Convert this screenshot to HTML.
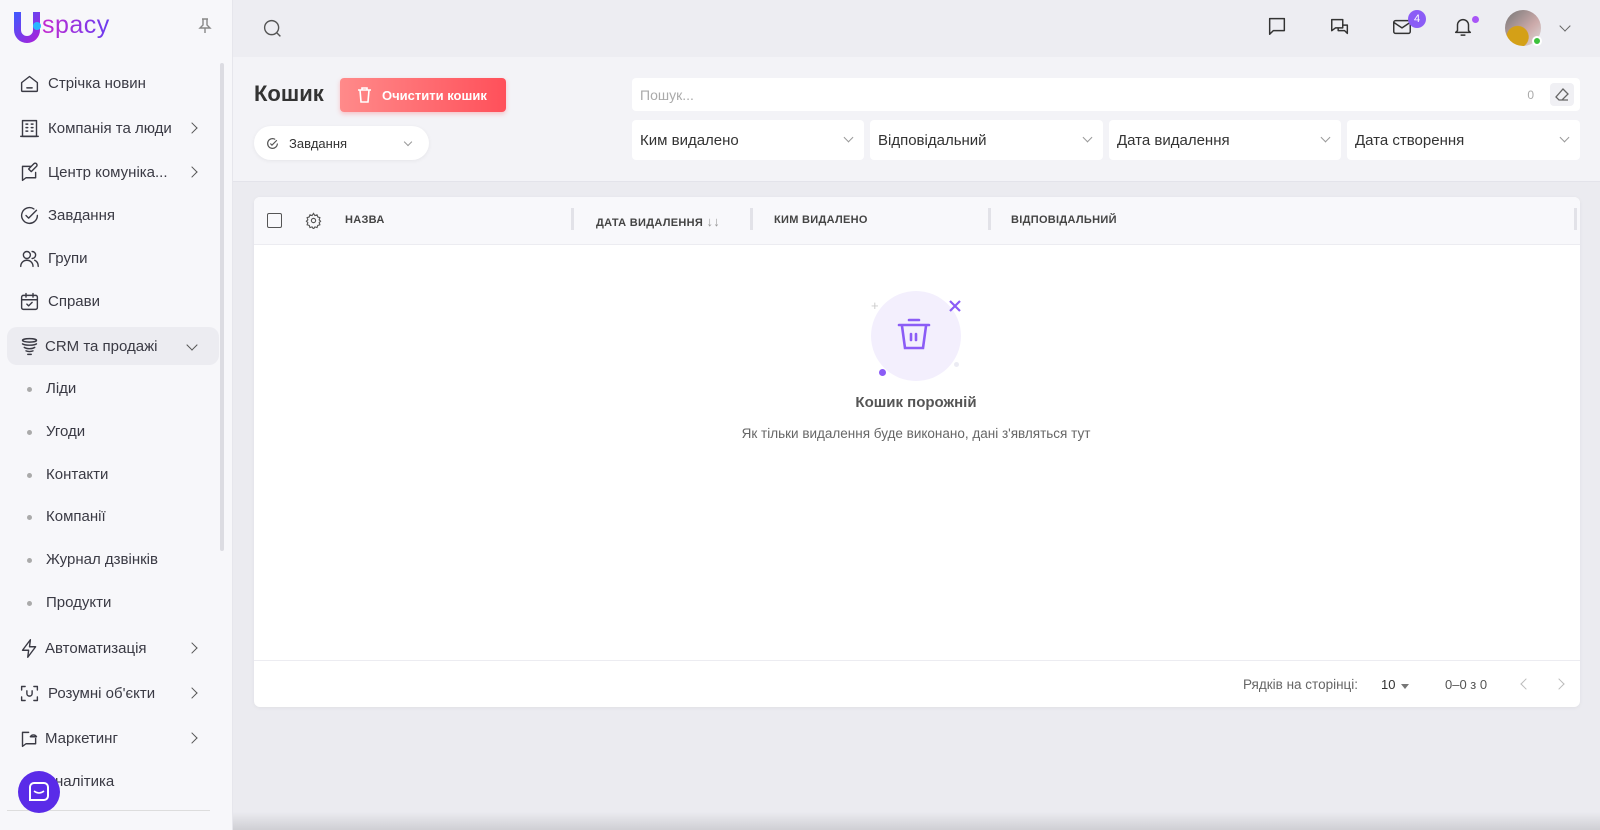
<!DOCTYPE html>
<html><head><meta charset="utf-8"><style>
*{box-sizing:border-box;margin:0;padding:0}
body{width:1600px;height:830px;overflow:hidden;font-family:"Liberation Sans","Noto Sans CJK SC",sans-serif;background:#ebebf0;position:relative;color:#333}
.abs{position:absolute}
.sb{position:absolute;left:0;top:0;width:233px;height:830px;background:#f7f7fa;border-right:1px solid #e6e6ec}
.mi{position:absolute;left:0;width:220px;height:38px;display:flex;align-items:center;font-size:15px;color:#3a3a44}
.mi svg{position:absolute;left:19px;width:21px;height:21px;fill:none;stroke:#3a3a44;stroke-width:1.6;stroke-linecap:round;stroke-linejoin:round}
.mi .t{position:absolute;left:48px}
.mi .ch{position:absolute;left:188px;width:8px;height:8px;border-right:1.6px solid #555;border-top:1.6px solid #555;transform:rotate(45deg)}
.sub{position:absolute;left:0;font-size:15px;color:#3a3a44}
.sub:before{content:"";position:absolute;left:27px;top:7px;width:5px;height:5px;border-radius:50%;background:#aaa}
.sub span{position:absolute;left:46px;white-space:nowrap}
.hi svg{fill:none;stroke:#333;stroke-width:1.6;stroke-linecap:round;stroke-linejoin:round}
.inp{position:absolute;background:#fff;border-radius:4px;font-size:15px;color:#333;display:flex;align-items:center;padding-left:8px}
.inp .dd{position:absolute;right:12px;top:14px;width:7px;height:7px;border-right:1.3px solid #999;border-bottom:1.3px solid #999;transform:rotate(45deg)}
.th{position:absolute;top:214px;font-size:11px;font-weight:bold;color:#444;letter-spacing:.3px}
.dv{position:absolute;top:208px;width:3px;height:22px;background:#e2e2e8}
</style></head><body>
<div class="sb">
  <svg class="abs" style="left:13px;top:12px" width="28" height="32" viewBox="0 0 28 32"><defs><linearGradient id="g" x1="0" y1="0" x2="1" y2="1"><stop offset="0" stop-color="#3b5bff"/><stop offset="1" stop-color="#b51bd6"/></linearGradient></defs><path d="M1 0h7v18a6 6 0 0 0 12 0V0h7v18a13 13 0 0 1-26 0z" fill="url(#g)"/></svg>
  <div class="abs" style="left:33px;top:22px;width:8px;height:8px;border-radius:50%;background:#2bb6ff"></div>
  <div class="abs" style="left:42px;top:11px;font-size:25px;color:#a32fd8;letter-spacing:.5px;background:linear-gradient(90deg,#c42ad0,#6a3cf0);-webkit-background-clip:text;color:transparent">spacy</div>
  <svg class="abs" style="left:198px;top:18px" width="14" height="16" viewBox="0 0 14 16" fill="none" stroke="#888" stroke-width="1.4"><path d="M4 1h6M5 1v6L2 10h10L9 7V1M7 10v5"/></svg>
  <div class="abs" style="left:220px;top:63px;width:4px;height:488px;border-radius:2px;background:#dcdce2"></div>

  <div class="mi" style="top:64px"><svg viewBox="0 0 24 24"><path d="M3 11l9-7 9 7v9a1 1 0 0 1-1 1H4a1 1 0 0 1-1-1z"/><path d="M9 17h6"/></svg><span class="t">Стрічка новин</span></div>
  <div class="mi" style="top:109px"><svg viewBox="0 0 24 24"><rect x="4" y="3" width="16" height="18"/><path d="M8 7h2M14 7h2M8 11h2M14 11h2M8 15h2M14 15h2M2 21h20"/></svg><span class="t">Компанія та люди</span><i class="ch"></i></div>
  <div class="mi" style="top:153px"><svg viewBox="0 0 24 24"><path d="M4 5h9M4 5v16l4-3h11v-6"/><path d="M14 11l6-6a2 2 0 0 0-3-3l-6 6z"/></svg><span class="t">Центр комуніка...</span><i class="ch"></i></div>
  <div class="mi" style="top:196px"><svg viewBox="0 0 24 24"><path d="M21 12a9 9 0 1 1-4-7.5"/><path d="M8 12l3 3 9-9"/></svg><span class="t">Завдання</span></div>
  <div class="mi" style="top:239px"><svg viewBox="0 0 24 24"><circle cx="9" cy="8" r="4"/><path d="M2 21c0-4 3-7 7-7s7 3 7 7M15 4a4 4 0 0 1 0 8M18 14c2 1 4 3 4 7"/></svg><span class="t">Групи</span></div>
  <div class="mi" style="top:282px"><svg viewBox="0 0 24 24"><rect x="3" y="5" width="18" height="16" rx="2"/><path d="M8 3v4M16 3v4M3 10h18M9 15l2 2 4-4"/></svg><span class="t">Справи</span></div>
  <div class="abs" style="left:7px;top:327px;width:212px;height:38px;border-radius:10px;background:#ececf1"></div>
  <div class="mi" style="top:327px"><svg viewBox="0 0 24 24"><ellipse cx="12" cy="5" rx="8" ry="2"/><path d="M4 9c3 2 13 2 16 0M6 13c3 2 9 2 12 0M8 17c2 1 6 1 8 0M10 21h4"/></svg><span class="t" style="left:45px">CRM та продажі</span><i class="ch" style="transform:rotate(135deg);top:14px"></i></div>
  <div class="sub" style="top:380px"><span>Ліди</span></div>
  <div class="sub" style="top:423px"><span>Угоди</span></div>
  <div class="sub" style="top:466px"><span>Контакти</span></div>
  <div class="sub" style="top:508px"><span>Компанії</span></div>
  <div class="sub" style="top:551px"><span>Журнал дзвінків</span></div>
  <div class="sub" style="top:594px"><span>Продукти</span></div>
  <div class="mi" style="top:629px"><svg viewBox="0 0 24 24"><path d="M13 2L4 14h7l-1 8 9-12h-7z"/></svg><span class="t" style="left:45px">Автоматизація</span><i class="ch"></i></div>
  <div class="mi" style="top:674px"><svg viewBox="0 0 24 24"><path d="M3 8V4h4M17 4h4v4M21 16v4h-4M7 20H3v-4M9 9v3a3 3 0 0 0 6 0V9"/></svg><span class="t">Розумні об'єкти</span><i class="ch"></i></div>
  <div class="mi" style="top:719px"><svg viewBox="0 0 24 24"><path d="M4 5h7M4 5v16l4-3h11v-6M13 10a4 4 0 0 1 7 0z"/></svg><span class="t" style="left:45px">Маркетинг</span><i class="ch"></i></div>
  <div class="mi" style="top:762px"><span class="t" style="left:45px">Аналітика</span></div>
  <div class="abs" style="left:7px;top:810px;width:203px;height:1px;background:#ddd"></div>
  <div class="abs" style="left:18px;top:771px;width:42px;height:42px;border-radius:50%;background:#5a2be8"></div>
  <div class="abs" style="left:29px;top:782px;width:20px;height:19px;border:2px solid #fff;border-radius:5px 5px 5px 0"></div>
  <svg class="abs" style="left:33px;top:790px" width="12" height="5" viewBox="0 0 12 5" fill="none" stroke="#fff" stroke-width="1.5"><path d="M1 1q5 4 10 0"/></svg>
</div>

<div class="abs" style="left:233px;top:0;width:1367px;height:57px;background:#ededf2"></div>
<svg class="abs" style="left:262px;top:18px" width="21" height="21" viewBox="0 0 24 24" fill="none" stroke="#555" stroke-width="1.6"><circle cx="11" cy="11" r="8"/><path d="M17 17l4 4"/></svg>
<div class="hi">
<svg class="abs" style="left:1266px;top:15px" width="22" height="22" viewBox="0 0 24 24"><path d="M4 4h16v13H8l-4 4z"/></svg>
<svg class="abs" style="left:1329px;top:16px" width="22" height="22" viewBox="0 0 24 24"><path d="M3 4h12v9H7l-4 3zM10 13v3h7l3 3v-9h-5"/></svg>
<svg class="abs" style="left:1391px;top:16px" width="22" height="22" viewBox="0 0 24 24"><rect x="3" y="5" width="18" height="14" rx="2"/><path d="M3 7l9 6 9-6"/></svg>
<svg class="abs" style="left:1452px;top:15px" width="22" height="22" viewBox="0 0 24 24"><path d="M6 17V11a6 6 0 0 1 12 0v6l2 2H4zM10 22h4"/></svg>
</div>
<div class="abs" style="left:1408px;top:10px;width:18px;height:18px;border-radius:50%;background:#8b5cf6;color:#fff;font-size:11px;text-align:center;line-height:18px">4</div>
<div class="abs" style="left:1472px;top:16px;width:7px;height:7px;border-radius:50%;background:#a855f7"></div>
<div class="abs" style="left:1505px;top:10px;width:36px;height:36px;border-radius:50%;background:radial-gradient(circle at 35% 75%,#d4a017 0 30%,transparent 32%),linear-gradient(135deg,#777,#caa 60%,#ddd)"></div>
<div class="abs" style="left:1532px;top:36px;width:10px;height:10px;border-radius:50%;background:#3cc23c;border:2px solid #fff"></div>
<div class="abs" style="left:1561px;top:22px;width:8px;height:8px;border-right:1.5px solid #666;border-bottom:1.5px solid #666;transform:rotate(45deg)"></div>

<div class="abs" style="left:233px;top:57px;width:1367px;height:125px;background:#f3f3f7;border-bottom:1px solid #e3e3ea"></div>
<div class="abs" style="left:254px;top:81px;font-size:22px;font-weight:bold;color:#333">Кошик</div>
<div class="abs" style="left:340px;top:78px;width:166px;height:34px;border-radius:4px;background:linear-gradient(90deg,#ff8a8a,#ff505a);box-shadow:0 2px 5px rgba(255,80,90,.3);color:#fff;font-size:13px;display:flex;align-items:center">
  <svg style="margin-left:17px" width="15" height="16" viewBox="0 0 15 16" fill="none" stroke="#fff" stroke-width="1.6"><path d="M1 3h13M5 3V1h5v2M3 3l1 12h7l1-12"/></svg><span style="margin-left:10px;font-weight:bold">Очистити кошик</span></div>
<div class="abs" style="left:254px;top:126px;width:175px;height:34px;border-radius:17px;background:#fff;box-shadow:0 1px 4px rgba(0,0,0,.06);font-size:13px;color:#333;display:flex;align-items:center">
  <svg style="margin-left:12px" width="13" height="13" viewBox="0 0 24 24" fill="none" stroke="#555" stroke-width="2.2"><path d="M21 12a9 9 0 1 1-4-7.5"/><path d="M8 12l3 3 9-9"/></svg><span style="margin-left:10px">Завдання</span>
  <i style="position:absolute;right:18px;top:13px;width:6px;height:6px;border-right:1.2px solid #999;border-bottom:1.2px solid #999;transform:rotate(45deg)"></i></div>
<div class="inp" style="left:632px;top:78px;width:948px;height:33px;color:#aaa;font-size:14px">Пошук...
  <span style="position:absolute;right:46px;font-size:12px;color:#aaa">0</span>
  <div style="position:absolute;right:6px;top:5px;width:24px;height:23px;background:#f0f0f4;border-radius:4px"></div>
  <svg style="position:absolute;right:11px;top:10px" width="14" height="13" viewBox="0 0 14 13" fill="none" stroke="#666" stroke-width="1.3"><path d="M5 12h8M8 1l5 5-6 6H4L1 9z"/></svg></div>
<div class="inp" style="left:632px;top:120px;width:232px;height:40px">Ким видалено<i class="dd"></i></div>
<div class="inp" style="left:870px;top:120px;width:233px;height:40px">Відповідальний<i class="dd"></i></div>
<div class="inp" style="left:1109px;top:120px;width:232px;height:40px">Дата видалення<i class="dd"></i></div>
<div class="inp" style="left:1347px;top:120px;width:233px;height:40px">Дата створення<i class="dd"></i></div>

<div class="abs" style="left:254px;top:197px;width:1326px;height:510px;background:#fff;border-radius:6px;box-shadow:0 1px 4px rgba(0,0,0,.05);overflow:hidden">
  <div style="height:48px;background:#f8f8fb;border-bottom:1px solid #ececf1"></div>
  <div style="position:absolute;left:0;top:463px;width:100%;height:1px;background:#ececf1"></div>
</div>
<div class="abs" style="left:267px;top:213px;width:15px;height:15px;border:1.6px solid #555;border-radius:2px"></div>
<svg class="abs" style="left:305px;top:212px" width="17" height="17" viewBox="0 0 24 24" fill="none" stroke="#555" stroke-width="1.6"><circle cx="12" cy="12" r="3"/><path d="M12 2l2 3 3-1 1 3 3 1-1 3 2 2-2 2 1 3-3 1-1 3-3-1-2 3-2-3-3 1-1-3-3-1 1-3-2-2 2-2-1-3 3-1 1-3 3 1z"/></svg>
<div class="th" style="left:345px">НАЗВА</div>
<div class="dv" style="left:571px"></div>
<div class="th" style="left:596px">ДАТА ВИДАЛЕННЯ <span style="color:#999;font-weight:normal;font-size:13px">↓↓</span></div>
<div class="dv" style="left:750px"></div>
<div class="th" style="left:774px">КИМ ВИДАЛЕНО</div>
<div class="dv" style="left:988px"></div>
<div class="th" style="left:1011px">ВІДПОВІДАЛЬНИЙ</div>
<div class="dv" style="left:1574px"></div>

<div class="abs" style="left:871px;top:291px;width:90px;height:90px;border-radius:50%;background:#f3effd"></div>
<svg class="abs" style="left:895px;top:315px" width="40" height="40" viewBox="0 0 40 40" fill="none" stroke="#8b5cf6" stroke-width="2.6" stroke-linecap="round"><path d="M14 5h10M4 10h30M7 11l3 22h18l3-22M16 19v6M21 19v6"/></svg>
<svg class="abs" style="left:948px;top:299px" width="14" height="14" viewBox="0 0 14 14" stroke="#8b5cf6" stroke-width="2.2"><path d="M2 2l10 10M12 2L2 12"/></svg>
<div class="abs" style="left:879px;top:369px;width:7px;height:7px;border-radius:50%;background:#8b5cf6"></div>
<div class="abs" style="left:871px;top:298px;color:#ccc;font-size:13px">+</div>
<div class="abs" style="left:954px;top:362px;width:5px;height:5px;border-radius:50%;background:#ebebf3"></div>
<div class="abs" style="left:0;width:1832px;top:394px;text-align:center;font-size:15px;font-weight:bold;color:#555">Кошик порожній</div>
<div class="abs" style="left:0;width:1832px;top:426px;text-align:center;font-size:13.5px;color:#666">Як тільки видалення буде виконано, дані з'являться тут</div>

<div class="abs" style="left:1243px;top:677px;font-size:13.5px;color:#666">Рядків на сторінці:</div>
<div class="abs" style="left:1381px;top:677px;font-size:13px;color:#333">10</div>
<div class="abs" style="left:1401px;top:684px;border:4px solid transparent;border-top:5px solid #777"></div>
<div class="abs" style="left:1445px;top:677px;font-size:13px;color:#555">0–0 з 0</div>
<div class="abs" style="left:1522px;top:680px;width:8px;height:8px;border-left:1.5px solid #bbb;border-bottom:1.5px solid #bbb;transform:rotate(45deg)"></div>
<div class="abs" style="left:1555px;top:680px;width:8px;height:8px;border-right:1.5px solid #bbb;border-top:1.5px solid #bbb;transform:rotate(45deg)"></div>
<div class="abs" style="left:233px;top:812px;width:1367px;height:18px;background:linear-gradient(#ebebf0,#cfcfd4)"></div>
</body></html>
